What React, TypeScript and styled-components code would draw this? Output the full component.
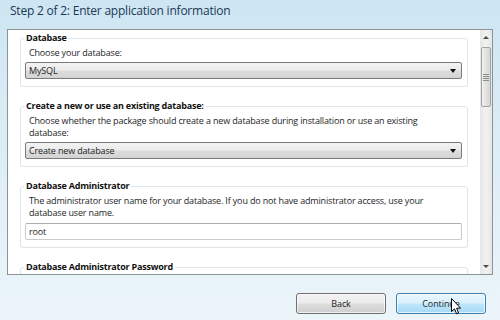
import styled, { createGlobalStyle } from "styled-components";

const GlobalStyle = createGlobalStyle`
  html, body {
    margin: 0;
    padding: 0;
  }
  body {
    font-family: "Open Sans", "Noto Sans", sans-serif;
    color: #1e1e1e;
  }
`;

const Window = styled.div`
  width: 500px;
  height: 320px;
  box-sizing: border-box;
  display: flex;
  flex-direction: column;
  overflow: hidden;
  position: relative;
  background: linear-gradient(180deg, #cde6f3 0%, #dcedf6 45%, #ecf5fa 100%);
`;

const Title = styled.h1`
  margin: 0;
  height: 29px;
  box-sizing: border-box;
  padding: 2px 0 0 10px;
  font-size: 12px;
  letter-spacing: -0.22px;
  font-weight: 400;
  line-height: 18px;
  color: #1d3755;
`;

const Panel = styled.div`
  margin: 0 7px 0 7px;
  height: 246px;
  box-sizing: border-box;
  border: 1px solid #8f9396;
  background: #fff;
  display: flex;
`;

const Content = styled.div`
  flex: 1;
  overflow: hidden;
  padding: 2px 12px 0 12px;
  display: flex;
  flex-direction: column;
  gap: 13px;
`;

const Group = styled.fieldset`
  margin: 0;
  padding: 3px 5px 7px 4px;
  border: 1px solid #dde4ea;
  border-radius: 3px;
  min-width: 0;
  flex-shrink: 0;
`;

const Legend = styled.legend`
  margin-left: -1px;
  padding: 0 2px;
  font-size: 9px;
  letter-spacing: -0.22px;
  line-height: 12px;
  font-weight: 700;
  color: #111;
`;

const Label = styled.div`
  padding: 0 4px;
  font-size: 9px;
  letter-spacing: -0.16px;
  line-height: 12px;
  color: #1e1e1e;
`;

const Select = styled.div`
  margin-top: 3px;
  height: 17px;
  box-sizing: border-box;
  border: 1px solid #7b7b7b;
  border-radius: 2px;
  background: linear-gradient(180deg, #f3f3f3 0%, #ebebeb 48%, #dddddd 52%, #d3d3d3 100%);
  display: flex;
  align-items: center;
  justify-content: space-between;
  padding: 0 5px 0 3px;
  font-size: 9px;
  letter-spacing: -0.16px;
  color: #1e1e1e;
`;

const Arrow = styled.span`
  width: 0;
  height: 0;
  border-left: 3px solid transparent;
  border-right: 3px solid transparent;
  border-top: 4px solid #111;
`;

const Input = styled.div`
  margin-top: 4px;
  height: 17px;
  box-sizing: border-box;
  border: 1px solid #c7ccd3;
  border-top-color: #a9aeb5;
  border-radius: 2px;
  background: #fff;
  display: flex;
  align-items: center;
  padding: 0 3px;
  font-size: 9px;
  letter-spacing: -0.16px;
  color: #1e1e1e;
`;

const Scrollbar = styled.div`
  width: 12px;
  background: linear-gradient(90deg, #e6e6e6, #f2f2f2 50%, #e6e6e6);
  display: flex;
  flex-direction: column;
  align-items: center;
`;

const ScrollArrow = styled.div<{ $up?: boolean }>`
  height: 15px;
  display: flex;
  align-items: center;
  justify-content: center;

  &::after {
    content: "";
    border-left: 3px solid transparent;
    border-right: 3px solid transparent;
    ${({ $up }) => ($up ? "border-bottom: 3px solid #4d4d4d;" : "border-top: 3px solid #4d4d4d;")}
  }
`;

const Track = styled.div`
  flex: 1;
  width: 100%;
  padding-top: 2px;
  box-sizing: border-box;
`;

const Thumb = styled.div`
  margin: 0 1px;
  height: 58px;
  border: 1px solid #a3a3a3;
  border-radius: 2px;
  background: linear-gradient(90deg, #f0f0f0, #e2e2e2 50%, #d6d6d6);
  display: flex;
  flex-direction: column;
  align-items: center;
  justify-content: center;
  gap: 1px;
`;

const Grip = styled.span`
  width: 6px;
  height: 1px;
  background: #8c8c8c;
`;

const Footer = styled.div`
  flex: 1;
  display: flex;
  justify-content: flex-end;
  align-items: flex-start;
  gap: 10px;
  padding: 18px 14px 0 0;
`;

const Button = styled.button<{ $focused?: boolean }>`
  width: 90px;
  height: 21px;
  box-sizing: border-box;
  border-radius: 3px;
  font-family: inherit;
  font-size: 9px;
  letter-spacing: -0.1px;
  color: #1e1e1e;
  padding: 0;
  border: 1px solid ${({ $focused }) => ($focused ? "#3c7fb1" : "#707070")};
  background: ${({ $focused }) =>
    $focused
      ? "linear-gradient(180deg, #eaf6fd 0%, #d9f0fc 48%, #bee6fd 52%, #a7d9f5 100%)"
      : "linear-gradient(180deg, #f2f2f2 0%, #ebebeb 48%, #dddddd 52%, #cfcfcf 100%)"};
  box-shadow: inset 0 0 0 1px rgba(255, 255, 255, 0.7);
`;

const Cursor = styled.svg`
  position: absolute;
  left: 451px;
  top: 298px;
`;

export default function App() {
  return (
    <>
      <GlobalStyle />
      <Window>
        <Title>Step 2 of 2: Enter application information</Title>
        <Panel>
          <Content>
            <Group>
              <Legend>Database</Legend>
              <Label>Choose your database:</Label>
              <Select>
                MySQL
                <Arrow />
              </Select>
            </Group>
            <Group>
              <Legend>Create a new or use an existing database:</Legend>
              <Label>
                Choose whether the package should create a new database during installation or use an existing
                database:
              </Label>
              <Select>
                Create new database
                <Arrow />
              </Select>
            </Group>
            <Group>
              <Legend>Database Administrator</Legend>
              <Label>
                The administrator user name for your database. If you do not have administrator access, use your
                database user name.
              </Label>
              <Input>root</Input>
            </Group>
            <Group>
              <Legend>Database Administrator Password</Legend>
              <Input />
            </Group>
          </Content>
          <Scrollbar>
            <ScrollArrow $up />
            <Track>
              <Thumb>
                <Grip />
                <Grip />
                <Grip />
                <Grip />
              </Thumb>
            </Track>
            <ScrollArrow />
          </Scrollbar>
        </Panel>
        <Footer>
          <Button>Back</Button>
          <Button $focused>Continue</Button>
        </Footer>
        <Cursor width="11" height="17" viewBox="0 0 11 17">
          <path
            d="M0.5 0.5 L0.5 13.5 L3.5 10.8 L5.6 15.8 L7.6 15 L5.6 10.2 L9.6 10.2 Z"
            fill="#fff"
            stroke="#000"
            strokeWidth="1"
            strokeLinejoin="round"
          />
        </Cursor>
      </Window>
    </>
  );
}
